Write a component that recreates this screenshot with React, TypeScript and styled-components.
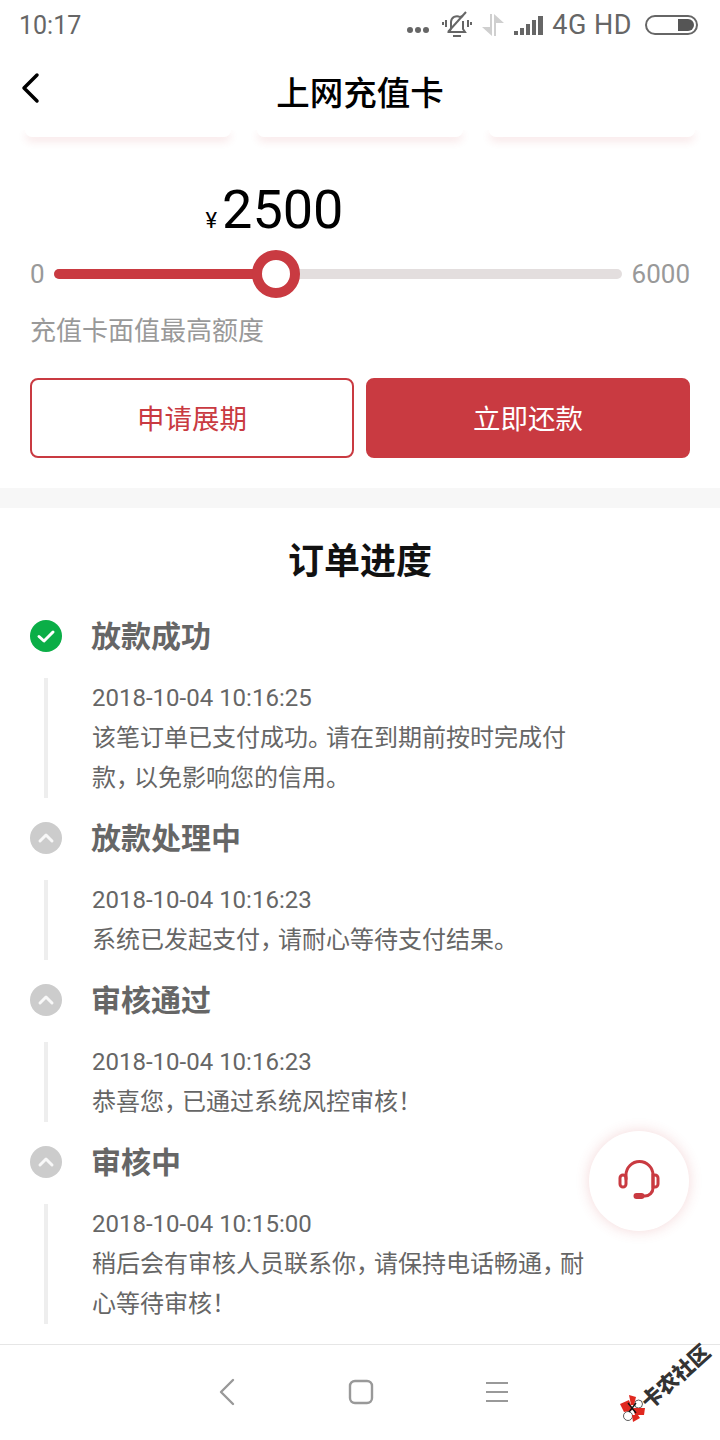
import React from 'react'
import styled, { createGlobalStyle } from 'styled-components'

const RED = '#c93a41'

const GlobalStyle = createGlobalStyle`
  html, body {
    margin: 0;
    padding: 0;
    background: #fff;
  }
  * {
    box-sizing: border-box;
  }
`

const Page = styled.div`
  position: relative;
  width: 720px;
  height: 1440px;
  overflow: hidden;
  background: #fff;
  font-family: Roboto, "Noto Sans CJK SC", sans-serif;
`

const StatusBar = styled.div`
  display: flex;
  align-items: center;
  height: 50px;
  padding: 0 22px 0 19px;
  color: #666;
  font-size: 26px;
`

const Clock = styled.span`
  flex: 1;
  font-size: 25px;
`

const Dots = styled.svg`
  margin: 10px 12px 0 0;
`

const StatusIcon = styled.svg`
  margin-right: 10px;
`

const NetLabel = styled.span`
  margin: 0 13px 0 -2px;
  font-size: 27px;
  letter-spacing: 0.5px;
  white-space: nowrap;
`

const NavBar = styled.div`
  position: relative;
  display: flex;
  align-items: center;
  justify-content: center;
  height: 80px;
`

const BackLink = styled.svg`
  position: absolute;
  left: 20px;
  top: 22px;
`

const Title = styled.h1`
  margin: 0;
  font-size: 33.5px;
  font-weight: 500;
  color: #000;
`

const CardStrip = styled.div`
  display: flex;
  justify-content: space-between;
  height: 24px;
  padding: 0 25px;
  overflow: hidden;
`

const PeekCard = styled.div`
  width: 206px;
  height: 7px;
  background: #fff;
  border-radius: 0 0 10px 10px;
  box-shadow: 0 4px 8px rgba(201, 58, 65, 0.14);
`

const Amount = styled.div`
  display: flex;
  align-items: baseline;
  justify-content: center;
  height: 66px;
  padding-right: 171px;
  margin-top: 23px;
  line-height: 66px;
  color: #000;
  font-size: 54px;
`

const Currency = styled.span`
  margin-right: 5px;
  font-size: 22px;
`

const SliderRow = styled.div`
  display: flex;
  align-items: center;
  height: 48px;
  margin-top: 7px;
  padding: 0 30px;
  color: #999;
  font-size: 26px;
`

const Track = styled.div`
  position: relative;
  flex: 1;
  height: 10px;
  margin: 0 10px 0 9px;
  border-radius: 5px;
  background: #e3dede;
`

const Fill = styled.div`
  height: 100%;
  border-radius: 5px;
  background: ${RED};
`

const Thumb = styled.div`
  position: absolute;
  top: 50%;
  width: 48px;
  height: 48px;
  margin: -24px 0 0 -24px;
  border: 10px solid ${RED};
  border-radius: 50%;
  background: #fff;
`

const Caption = styled.div`
  margin-top: 15px;
  padding: 0 30px;
  line-height: 36px;
  color: #999;
  font-size: 26px;
`

const Actions = styled.div`
  display: grid;
  grid-template-columns: 324px 324px;
  gap: 12px;
  margin-top: 29px;
  padding: 0 30px;
`

const ActionButton = styled.button<{ $solid?: boolean }>`
  height: 80px;
  padding: 0 0 2px;
  border: 2px solid ${RED};
  border-radius: 8px;
  background: ${props => (props.$solid ? RED : '#fff')};
  color: ${props => (props.$solid ? '#fff' : RED)};
  font-family: inherit;
  font-size: 27.5px;
`

const Divider = styled.div`
  height: 20px;
  margin-top: 30px;
  background: #f7f7f7;
`

const SectionTitle = styled.h2`
  margin: 0;
  padding-top: 31px;
  height: 108px;
  line-height: 46px;
  text-align: center;
  font-size: 36px;
  font-weight: 700;
  color: #111;
`

const Steps = styled.div`
  padding: 0 30px;
`

const Step = styled.div`
  margin-bottom: 20px;
`

const StepHead = styled.div`
  display: flex;
  align-items: center;
  height: 40px;
  margin-bottom: 22px;
`

const StepBadge = styled.div<{ $done?: boolean }>`
  display: flex;
  align-items: center;
  justify-content: center;
  width: 32px;
  height: 32px;
  border-radius: 50%;
  background: ${props => (props.$done ? '#0bae47' : '#cccccc')};
`

const StepTitle = styled.div`
  margin-left: 29px;
  padding-bottom: 4px;
  font-size: 30px;
  font-weight: 700;
  color: #666;
`

const StepBody = styled.div`
  margin-left: 14px;
  padding-left: 44px;
  border-left: 4px solid #eee;
  width: 556px;
  color: #666;
  font-size: 24px;
`

const Line = styled.div`
  height: 40px;
  line-height: 40px;
  white-space: nowrap;
`

const Punct = styled.span`
  letter-spacing: -6px;
`

const Fab = styled.div`
  position: absolute;
  left: 589px;
  top: 1131px;
  display: flex;
  align-items: center;
  justify-content: center;
  width: 100px;
  height: 100px;
  border-radius: 50%;
  background: #fff;
  box-shadow: 0 0 14px rgba(201, 58, 65, 0.2);
`

const SystemBar = styled.div`
  position: absolute;
  left: 0;
  right: 0;
  top: 1344px;
  height: 96px;
  border-top: 1px solid #e6e6e6;
  background: #fff;
`

const SystemIcon = styled.svg<{ $x: number }>`
  position: absolute;
  left: ${props => props.$x}px;
  top: 32px;
`

const Watermark = styled.div`
  position: absolute;
  left: 620px;
  top: 1346px;
  width: 100px;
  height: 80px;
`

const WatermarkLogo = styled.svg`
  position: absolute;
  left: 0;
  top: 49px;
`

const WatermarkText = styled.span`
  position: absolute;
  left: 14px;
  top: 19px;
  transform: rotate(-42deg);
  white-space: nowrap;
  color: #333;
  font-size: 21px;
  font-weight: 900;
  line-height: 24px;
`

const steps = [
  {
    title: '放款成功',
    time: '2018-10-04 10:16:25',
    done: true,
    lines: ['该笔订单已支付成功。请在到期前按时完成付', '款，以免影响您的信用。'],
  },
  {
    title: '放款处理中',
    time: '2018-10-04 10:16:23',
    lines: ['系统已发起支付，请耐心等待支付结果。'],
  },
  {
    title: '审核通过',
    time: '2018-10-04 10:16:23',
    lines: ['恭喜您，已通过系统风控审核！'],
  },
  {
    title: '审核中',
    time: '2018-10-04 10:15:00',
    lines: ['稍后会有审核人员联系你，请保持电话畅通，耐', '心等待审核！'],
  },
]

// the source font sets CJK punctuation narrower than a full em
const tightPunct = (text: string) =>
  text.split(/([，。！])/).map((part, i) =>
    /[，。！]/.test(part) ? <Punct key={i}>{part}</Punct> : part,
  )

const App: React.FC = () => {
  return (
    <Page>
      <GlobalStyle />
      <StatusBar>
        <Clock>10:17</Clock>
        <Dots width="24" height="8" viewBox="0 0 24 8" fill="#666">
          <circle cx="4" cy="4" r="3" />
          <circle cx="12" cy="4" r="3" />
          <circle cx="20" cy="4" r="3" />
        </Dots>
        <StatusIcon width="30" height="28" viewBox="0 0 30 28" fill="none" stroke="#666" strokeWidth="2">
          <path d="M9 18V11a6 6 0 0 1 9-5l3-1M21 10v8l2 3H7l2-3" />
          <path d="M11 25h8" />
          <path d="M6 21 L24 1" />
          <path d="M4 9v7M1 11v3M26 9v7M29 11v3" />
        </StatusIcon>
        <StatusIcon width="22" height="22" viewBox="0 0 22 22" fill="#cfcfcf">
          <path d="M8 0h2v22L0 13h8zM12 0l10 9h-8v13h-2z" />
        </StatusIcon>
        <StatusIcon width="30" height="20" viewBox="0 0 30 20" fill="#666">
          <rect x="0" y="16" width="4" height="4" />
          <rect x="6" y="13" width="4" height="7" />
          <rect x="12" y="9" width="4" height="11" />
          <rect x="18" y="5" width="4" height="15" />
          <rect x="24" y="1" width="5" height="19" />
        </StatusIcon>
        <NetLabel>4G HD</NetLabel>
        <svg width="53" height="20" viewBox="0 0 53 20">
          <rect x="1" y="1" width="51" height="18" rx="9" fill="none" stroke="#666" strokeWidth="2" />
          <path d="M33 4h10a6 6 0 0 1 6 6 6 6 0 0 1-6 6H33z" fill="#555" />
        </svg>
      </StatusBar>
      <NavBar>
        <BackLink width="22" height="32" viewBox="0 0 22 32" fill="none" stroke="#000" strokeWidth="3.5" strokeLinecap="round" strokeLinejoin="round">
          <path d="M17 3 4 16l13 13" />
        </BackLink>
        <Title>上网充值卡</Title>
      </NavBar>
      <CardStrip>
        <PeekCard />
        <PeekCard />
        <PeekCard />
      </CardStrip>
      <Amount>
        <Currency>¥</Currency>2500
      </Amount>
      <SliderRow>
        0
        <Track>
          <Fill style={{ width: `${(222 / 568) * 100}%` }} />
          <Thumb style={{ left: `${(222 / 568) * 100}%` }} />
        </Track>
        6000
      </SliderRow>
      <Caption>充值卡面值最高额度</Caption>
      <Actions>
        <ActionButton>申请展期</ActionButton>
        <ActionButton $solid>立即还款</ActionButton>
      </Actions>
      <Divider />
      <SectionTitle>订单进度</SectionTitle>
      <Steps>
        {steps.map(step => (
          <Step key={step.title}>
            <StepHead>
              <StepBadge $done={step.done}>
                <svg width="20" height="20" viewBox="0 0 20 20" fill="none" stroke="#fff" strokeWidth="3" strokeLinecap="round" strokeLinejoin="round">
                  {step.done ? <path d="M3 10.5 8 15l9-9" /> : <path d="M4 13l6-6 6 6" opacity="0.85" />}
                </svg>
              </StepBadge>
              <StepTitle>{step.title}</StepTitle>
            </StepHead>
            <StepBody>
              <Line>{step.time}</Line>
              {step.lines.map(line => (
                <Line key={line}>{tightPunct(line)}</Line>
              ))}
            </StepBody>
          </Step>
        ))}
      </Steps>
      <Fab>
        <svg width="44" height="44" viewBox="0 0 44 44" fill="none" stroke={RED} strokeWidth="3" strokeLinecap="round">
          <path d="M9 20v-4a13.5 13.5 0 0 1 27 0v13a8 8 0 0 1-8 8h-3" />
          <rect x="3" y="16" width="6" height="12" rx="3" />
          <path d="M36 16h2a3 3 0 0 1 3 3v6a3 3 0 0 1-3 3h-2z" />
          <rect x="18" y="35.5" width="8" height="3" rx="1.5" fill={RED} />
        </svg>
      </Fab>
      <SystemBar>
        <SystemIcon $x={218} width="18" height="30" viewBox="0 0 18 30" fill="none" stroke="#999" strokeWidth="2.4" strokeLinecap="round" strokeLinejoin="round">
          <path d="M15 3 3 15l12 12" />
        </SystemIcon>
        <SystemIcon $x={348} width="26" height="30" viewBox="0 0 26 30" fill="none" stroke="#999" strokeWidth="2.4">
          <rect x="2" y="4" width="22" height="22" rx="5" />
        </SystemIcon>
        <SystemIcon $x={485} width="24" height="30" viewBox="0 0 24 30" fill="none" stroke="#999" strokeWidth="2.2">
          <path d="M1 6h22M1 15h22M1 24h22" />
        </SystemIcon>
      </SystemBar>
      <Watermark>
        <WatermarkLogo width="26" height="28" viewBox="0 0 26 28">
          <circle cx="18.5" cy="9" r="4" fill="#fff" stroke="#333" strokeWidth="0.8" />
          <circle cx="8" cy="21" r="4.5" fill="#fff" stroke="#333" strokeWidth="0.8" />
          <path d="M0 9l9-4 4 10-9 2z" fill="#e0281f" />
          <path d="M9 0l7 2-2 8h-3z" fill="#e0281f" />
          <path d="M13 13h12l-1 7h-9z" fill="#e0281f" />
          <path d="M12 20h6l2 3-7 4z" fill="#e0281f" />
          <path d="M8 8l8 10M16 8 9 17" stroke="#111" strokeWidth="1.4" />
        </WatermarkLogo>
        <WatermarkText>卡农社区</WatermarkText>
      </Watermark>
    </Page>
  )
}

export default App
